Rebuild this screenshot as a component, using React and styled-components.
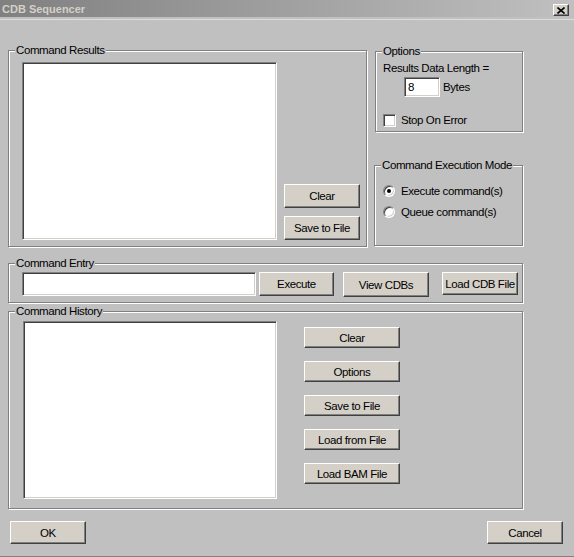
import styled, { createGlobalStyle } from 'styled-components';

const GlobalStyle = createGlobalStyle`
    html, body {
        margin: 0;
        padding: 0;
        background: #c0c0c0;
    }
    body {
        font-family: "Liberation Sans", Arial, sans-serif;
        font-size: 11.5px;
        letter-spacing: -0.4px;
        color: #000;
    }
`;

const Window = styled.div`
    box-sizing: border-box;
    width: 574px;
    height: 557px;
    background: #c0c0c0;
    border-bottom: 1px solid #808080;
    display: flex;
    flex-direction: column;
    overflow: hidden;
`;

const TitleBar = styled.div`
    height: 17px;
    display: flex;
    justify-content: space-between;
    align-items: flex-start;
    padding: 0 5px 0 2px;
    background: linear-gradient(to right, #808080, #c0c0c0);
`;

const Title = styled.span`
    font-size: 11px;
    font-weight: bold;
    letter-spacing: 0;
    line-height: 19px;
    color: #d4d0c8;
`;

const CloseButton = styled.button`
    box-sizing: border-box;
    width: 16px;
    height: 12px;
    margin-top: 4px;
    padding: 0;
    display: flex;
    align-items: center;
    justify-content: center;
    background: #d4d0c8;
    border: 1px solid;
    border-color: #fff #404040 #404040 #fff;
    box-shadow: inset -1px -1px 0 #808080;
`;

const Separator = styled.div`
    height: 1px;
    margin-top: 2px;
    background: #dcdcdc;
`;

const Content = styled.div`
    display: flex;
    flex-direction: column;
    padding-left: 8px;
`;

const TopRow = styled.div`
    display: flex;
    align-items: flex-start;
    gap: 7px;
    margin-top: 30px;
`;

const SideColumn = styled.div`
    width: 149px;
    display: flex;
    flex-direction: column;
`;

const Group = styled.div`
    box-sizing: border-box;
    width: ${(props) => props.$w}px;
    height: ${(props) => props.$h}px;
    margin: ${(props) => props.$mt || 0}px 0 0 ${(props) => props.$ml || 0}px;
    border: 1px solid #808080;
    box-shadow: inset 1px 1px 0 #fff, 1px 1px 0 #fff;
    display: flex;
    flex-direction: column;
`;

const Legend = styled.span`
    align-self: flex-start;
    height: 14px;
    line-height: 14px;
    margin: -8px 0 0 6px;
    padding: 0 1px;
    background: #c0c0c0;
    white-space: nowrap;
`;

const GroupBody = styled.div`
    display: flex;
    flex-direction: ${(props) => props.$dir || 'row'};
    align-items: ${(props) => props.$align || 'flex-start'};
    margin-top: ${(props) => props.$mt || 0}px;
    padding-left: ${(props) => props.$pl || 0}px;
`;

const ListBox = styled.div`
    box-sizing: border-box;
    width: ${(props) => props.$w}px;
    height: ${(props) => props.$h}px;
    background: #fff;
    border: 1px solid;
    border-color: #808080 #fff #fff #808080;
    box-shadow: inset 1px 1px 0 #404040, inset -1px -1px 0 #d4d0c8;
`;

const TextField = styled.input`
    box-sizing: border-box;
    width: ${(props) => props.$w}px;
    height: ${(props) => props.$h}px;
    margin: 0;
    padding: 0 0 0 3px;
    background: #fff;
    border: 1px solid;
    border-color: #808080 #fff #fff #808080;
    box-shadow: inset 1px 1px 0 #404040, inset -1px -1px 0 #d4d0c8;
    font: inherit;
    letter-spacing: inherit;
    color: #000;
    outline: none;
`;

const Button = styled.button`
    box-sizing: border-box;
    width: ${(props) => props.$w}px;
    height: ${(props) => props.$h}px;
    margin-left: ${(props) => props.$ml || 0}px;
    padding: 0;
    background: #d4d0c8;
    border: 1px solid;
    border-color: #fff #404040 #404040 #fff;
    box-shadow: inset -1px -1px 0 #808080;
    font: inherit;
    letter-spacing: inherit;
    color: #000;
    white-space: nowrap;
`;

const ButtonStack = styled.div`
    display: flex;
    flex-direction: column;
    gap: ${(props) => props.$gap}px;
    margin-left: ${(props) => props.$ml}px;
    padding-top: ${(props) => props.$pt || 0}px;
`;

const TextLine = styled.div`
    line-height: 14px;
    margin-top: ${(props) => props.$mt || 0}px;
`;

const FieldRow = styled.div`
    display: flex;
    align-items: center;
    gap: ${(props) => props.$gap}px;
    margin-top: ${(props) => props.$mt || 0}px;
    padding-left: ${(props) => props.$pl || 0}px;
    line-height: 14px;
    white-space: nowrap;
`;

const CheckBox = styled.span`
    box-sizing: border-box;
    width: 13px;
    height: 13px;
    background: #fff;
    border: 1px solid;
    border-color: #808080 #fff #fff #808080;
    box-shadow: inset 1px 1px 0 #404040, inset -1px -1px 0 #d4d0c8;
`;

const Radio = styled.span`
    box-sizing: border-box;
    width: 12px;
    height: 12px;
    border-radius: 50%;
    background: #fff;
    border: 1px solid;
    border-color: #808080 #fff #fff #808080;
    box-shadow: inset 1px 1px 0 #404040, inset -1px -1px 0 #d4d0c8;
    display: flex;
    align-items: center;
    justify-content: center;

    &::after {
        content: '';
        width: 4px;
        height: 4px;
        border-radius: 50%;
        background: ${(props) => (props.$checked ? '#000' : 'transparent')};
    }
`;

const Footer = styled.div`
    display: flex;
    justify-content: space-between;
    margin-top: 12px;
    padding: 0 11px 0 2px;
`;

const historyButtons = ['Clear', 'Options', 'Save to File', 'Load from File', 'Load BAM File'];

export default function App() {
    return (
        <>
            <GlobalStyle />
            <Window>
                <TitleBar>
                    <Title>CDB Sequencer</Title>
                    <CloseButton aria-label="Close">
                        <svg width="8" height="7" viewBox="0 0 8 7">
                            <path d="M0.5 0.5 L7.5 6.5 M7.5 0.5 L0.5 6.5" stroke="#000" strokeWidth="1.6" />
                        </svg>
                    </CloseButton>
                </TitleBar>
                <Separator />
                <Content>
                    <TopRow>
                        <Group $w={359} $h={197}>
                            <Legend>Command Results</Legend>
                            <GroupBody $mt={5} $pl={13} $align="flex-end">
                                <ListBox $w={255} $h={178} />
                                <ButtonStack $gap={8} $ml={7}>
                                    <Button $w={76} $h={24}>Clear</Button>
                                    <Button $w={76} $h={24}>Save to File</Button>
                                </ButtonStack>
                            </GroupBody>
                        </Group>
                        <SideColumn>
                            <Group $w={148} $h={81} $mt={1} $ml={1}>
                                <Legend>Options</Legend>
                                <GroupBody $dir="column" $pl={7}>
                                    <TextLine $mt={3}>Results Data Length =</TextLine>
                                    <FieldRow $gap={3} $mt={2} $pl={21}>
                                        <TextField $w={36} $h={20} defaultValue="8" />
                                        <span>Bytes</span>
                                    </FieldRow>
                                    <FieldRow $gap={5} $mt={16}>
                                        <CheckBox />
                                        <span>Stop On Error</span>
                                    </FieldRow>
                                </GroupBody>
                            </Group>
                            <Group $w={149} $h={81} $mt={33}>
                                <Legend>Command Execution Mode</Legend>
                                <GroupBody $dir="column" $pl={8}>
                                    <FieldRow $gap={6} $mt={12}>
                                        <Radio $checked />
                                        <span>Execute command(s)</span>
                                    </FieldRow>
                                    <FieldRow $gap={6} $mt={7}>
                                        <Radio />
                                        <span>Queue command(s)</span>
                                    </FieldRow>
                                </GroupBody>
                            </Group>
                        </SideColumn>
                    </TopRow>

                    <Group $w={515} $h={40} $mt={16}>
                        <Legend>Command Entry</Legend>
                        <GroupBody $mt={2} $pl={13}>
                            <TextField $w={234} $h={24} />
                            <Button $w={75} $h={24} $ml={3}>Execute</Button>
                            <Button $w={86} $h={25} $ml={9}>View CDBs</Button>
                            <Button $w={76} $h={23} $ml={13}>Load CDB File</Button>
                        </GroupBody>
                    </Group>

                    <Group $w={515} $h={198} $mt={8}>
                        <Legend>Command History</Legend>
                        <GroupBody $mt={3} $pl={14}>
                            <ListBox $w={254} $h={178} />
                            <ButtonStack $gap={13} $ml={27} $pt={6}>
                                {historyButtons.map((label) => (
                                    <Button key={label} $w={96} $h={21}>
                                        {label}
                                    </Button>
                                ))}
                            </ButtonStack>
                        </GroupBody>
                    </Group>

                    <Footer>
                        <Button $w={76} $h={23}>OK</Button>
                        <Button $w={76} $h={23}>Cancel</Button>
                    </Footer>
                </Content>
            </Window>
        </>
    );
}
